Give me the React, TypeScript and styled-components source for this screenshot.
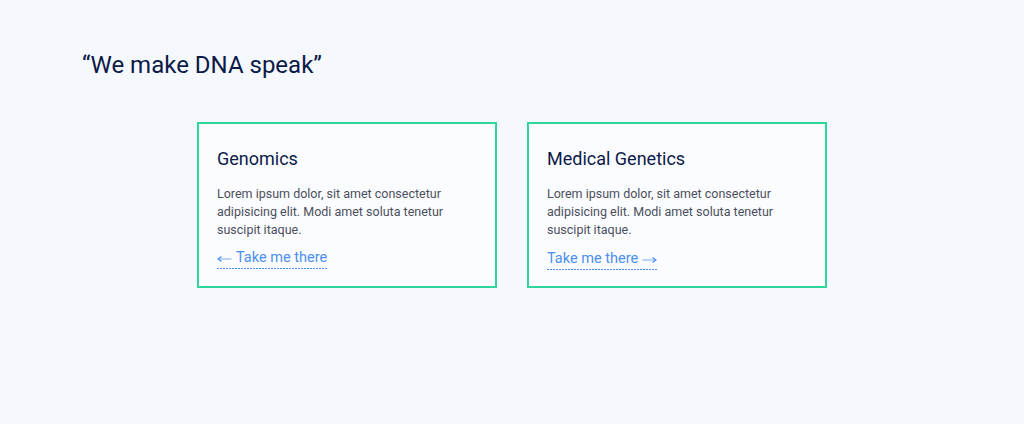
import styled, { createGlobalStyle } from 'styled-components';

const GlobalStyle = createGlobalStyle`
  html, body {
    margin: 0;
    padding: 0;
    background: #f5f8fd;
  }
  body {
    font-family: Roboto, 'Liberation Sans', sans-serif;
    -webkit-font-smoothing: antialiased;
  }
`;

const Page = styled.main`
  width: 1024px;
  height: 424px;
  box-sizing: border-box;
  padding: 49px 0 0 82px;
  background: #f5f8fd;
`;

const Quote = styled.h1`
  margin: 0;
  font-size: 24px;
  font-weight: 400;
  line-height: 32px;
  color: #0c1a48;
`;

const Cards = styled.div`
  display: flex;
  justify-content: center;
  gap: 30px;
  margin: 41px 82px 0 0;
`;

const Card = styled.article`
  width: 300px;
  box-sizing: border-box;
  border: 2px solid #2ed69a;
  background: #fbfcff;
  padding: 23px 18px 16px;
`;

const Title = styled.h2`
  margin: 0 0 14px;
  font-size: 18px;
  font-weight: 400;
  line-height: 24px;
  color: #0c1a48;
`;

const Text = styled.p`
  margin: 0 0 9px;
  font-size: 12.5px;
  line-height: 18px;
  color: #4b4f5c;
`;

const Link = styled.a`
  display: inline-flex;
  align-items: center;
  gap: 4px;
  font-size: 14.5px;
  line-height: 18px;
  color: #4a8ff0;
  text-decoration: none;
  padding-bottom: 2px;
  background-image: repeating-linear-gradient(
    90deg,
    #4a8ff0 0 2px,
    transparent 2px 3px
  );
  background-size: 100% 1px;
  background-repeat: no-repeat;
  background-position: 0 100%;
`;

const ArrowIcon = styled.svg`
  width: 15px;
  height: 8px;
  flex: none;
  margin-top: 2px;
`;

function Arrow({ dir }: { dir: 'left' | 'right' }) {
  return (
    <ArrowIcon viewBox="0 0 15 8" style={dir === 'left' ? { transform: 'scaleX(-1)' } : undefined}>
      <path d="M0.5 4H13" stroke="#8db8f5" strokeWidth="1.2" fill="none" />
      <path d="M10.5 1.5L14 4L10.5 6.5" stroke="#4a8ff0" strokeWidth="1.2" fill="none" />
    </ArrowIcon>
  );
}

const items: { title: string; dir: 'left' | 'right' }[] = [
  { title: 'Genomics', dir: 'left' },
  { title: 'Medical Genetics', dir: 'right' },
];

export default function App() {
  return (
    <>
      <GlobalStyle />
      <Page>
        <Quote>“We make DNA speak”</Quote>
        <Cards>
          {items.map((item) => (
            <Card key={item.title}>
              <Title>{item.title}</Title>
              <Text>
                Lorem ipsum dolor, sit amet consectetur adipisicing elit. Modi amet soluta tenetur
                suscipit itaque.
              </Text>
              <Link href="#">
                {item.dir === 'left' && <Arrow dir="left" />}
                Take me there
                {item.dir === 'right' && <Arrow dir="right" />}
              </Link>
            </Card>
          ))}
        </Cards>
      </Page>
    </>
  );
}
